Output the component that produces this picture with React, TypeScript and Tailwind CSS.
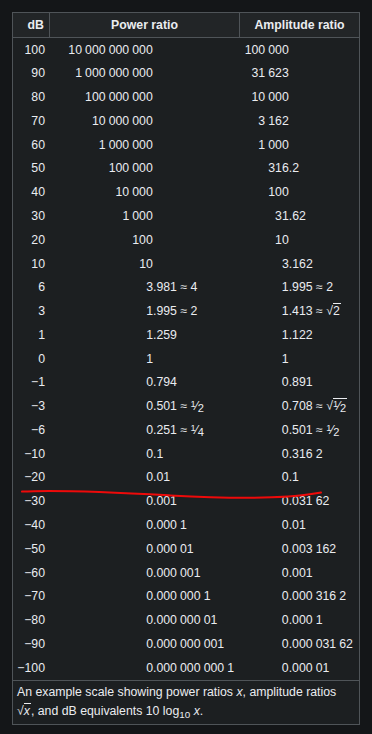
import { ReactNode } from "react";

type TopRow = {
  db: string;
  power: string;
  ampInt: string;
  ampFrac?: string;
};

type LowRow = {
  db: string;
  power: ReactNode;
  amp: ReactNode;
};

// numbers written like {{val}}: groups of digits split by a narrow gap
const Grouped = ({ v }: { v: string }) => (
  <>
    {v.split(" ").map((part, i) => (
      <span key={i} className={i ? "ml-[0.25em]" : ""}>
        {part}
      </span>
    ))}
  </>
);

const Frac = ({ n, d }: { n: string; d: string }) => (
  <span className="whitespace-nowrap">
    <span className="relative -top-[0.35em] text-[0.75em]">{n}</span>
    <span>⁄</span>
    <span className="relative top-[0.15em] text-[0.9em]">{d}</span>
  </span>
);

const Sqrt = ({ children }: { children: ReactNode }) => (
  <span className="whitespace-nowrap">
    √<span className="border-t border-current pr-[1px]">{children}</span>
  </span>
);

const topRows: TopRow[] = [
  { db: "100", power: "10 000 000 000", ampInt: "100 000" },
  { db: "90", power: "1 000 000 000", ampInt: "31 623" },
  { db: "80", power: "100 000 000", ampInt: "10 000" },
  { db: "70", power: "10 000 000", ampInt: "3 162" },
  { db: "60", power: "1 000 000", ampInt: "1 000" },
  { db: "50", power: "100 000", ampInt: "316", ampFrac: ".2" },
  { db: "40", power: "10 000", ampInt: "100" },
  { db: "30", power: "1 000", ampInt: "31", ampFrac: ".62" },
  { db: "20", power: "100", ampInt: "10" },
  { db: "10", power: "10", ampInt: "3", ampFrac: ".162" },
];

const lowRows: LowRow[] = [
  { db: "6", power: <>3.981 ≈ 4</>, amp: <>1.995 ≈ 2</> },
  { db: "3", power: <>1.995 ≈ 2</>, amp: <>1.413 ≈ <Sqrt>2</Sqrt></> },
  { db: "1", power: "1.259", amp: "1.122" },
  { db: "0", power: "1", amp: "1" },
  { db: "−1", power: "0.794", amp: "0.891" },
  {
    db: "−3",
    power: <>0.501 ≈ <Frac n="1" d="2" /></>,
    amp: <>0.708 ≈ <Sqrt><Frac n="1" d="2" /></Sqrt></>,
  },
  {
    db: "−6",
    power: <>0.251 ≈ <Frac n="1" d="4" /></>,
    amp: <>0.501 ≈ <Frac n="1" d="2" /></>,
  },
  { db: "−10", power: "0.1", amp: <Grouped v="0.316 2" /> },
  { db: "−20", power: "0.01", amp: "0.1" },
  { db: "−30", power: "0.001", amp: <Grouped v="0.031 62" /> },
  { db: "−40", power: <Grouped v="0.000 1" />, amp: "0.01" },
  { db: "−50", power: <Grouped v="0.000 01" />, amp: <Grouped v="0.003 162" /> },
  { db: "−60", power: <Grouped v="0.000 001" />, amp: "0.001" },
  { db: "−70", power: <Grouped v="0.000 000 1" />, amp: <Grouped v="0.000 316 2" /> },
  { db: "−80", power: <Grouped v="0.000 000 01" />, amp: <Grouped v="0.000 1" /> },
  { db: "−90", power: <Grouped v="0.000 000 001" />, amp: <Grouped v="0.000 031 62" /> },
  { db: "−100", power: <Grouped v="0.000 000 000 1" />, amp: <Grouped v="0.000 01" /> },
];

const App = () => {
  return (
    <div className="relative min-h-screen bg-[#141618] pt-3 pl-3 font-['Liberation_Sans',Arial,sans-serif] text-[12.3px] text-[#eaecf0]">
      <div className="w-[348px] border border-[#4f5458] bg-[#1c1f21]">
        <div className="flex h-[25px] border-b border-[#4f5458] bg-[#222527] font-bold">
          <div className="flex w-[37px] items-center justify-end border-r border-[#4f5458] pr-[5px]">
            dB
          </div>
          <div className="flex w-[190px] items-center justify-center border-r border-[#4f5458]">
            Power ratio
          </div>
          <div className="flex flex-1 items-center justify-center">Amplitude ratio</div>
        </div>

        {topRows.map((row) => (
          <div key={row.db} className="flex h-[23.78px] items-center whitespace-nowrap">
            <div className="w-[37px] pr-[5px] text-right">{row.db}</div>
            <div className="w-[190px] pr-[87.2px] text-right">
              <Grouped v={row.power} />
            </div>
            <div className="flex flex-1">
              <span className="inline-block w-[48.8px] text-right">
                <Grouped v={row.ampInt} />
              </span>
              {row.ampFrac && <span>{row.ampFrac}</span>}
            </div>
          </div>
        ))}

        {lowRows.map((row) => (
          <div key={row.db} className="flex h-[23.78px] items-center whitespace-nowrap">
            <div className="w-[37px] pr-[5px] text-right">{row.db}</div>
            <div className="w-[190px] pl-[96.2px]">{row.power}</div>
            <div className="flex-1 pl-[41.8px]">{row.amp}</div>
          </div>
        ))}

        <div className="border-t border-[#4f5458] py-[2.5px] pl-[4px] pr-[5px] leading-[19px]">
          An example scale showing power ratios <i>x</i>, amplitude ratios
          <br />
          <Sqrt>
            <i>x</i>
          </Sqrt>
          , and dB equivalents 10 log<sub className="text-[0.8em]">10</sub> <i>x</i>.
        </div>
      </div>

      <svg
        className="pointer-events-none absolute left-0 top-0"
        width="372"
        height="734"
        viewBox="0 0 372 734"
      >
        <path
          d="M22 491.6 C 60 489.2, 120 492.6, 170 495.4 C 215 497.8, 255 498.6, 288 496.6 C 303 495.6, 312 494, 321 492.6"
          fill="none"
          stroke="#ee0a0a"
          strokeWidth="2"
          strokeLinecap="round"
        />
      </svg>
    </div>
  );
};

export default App;
